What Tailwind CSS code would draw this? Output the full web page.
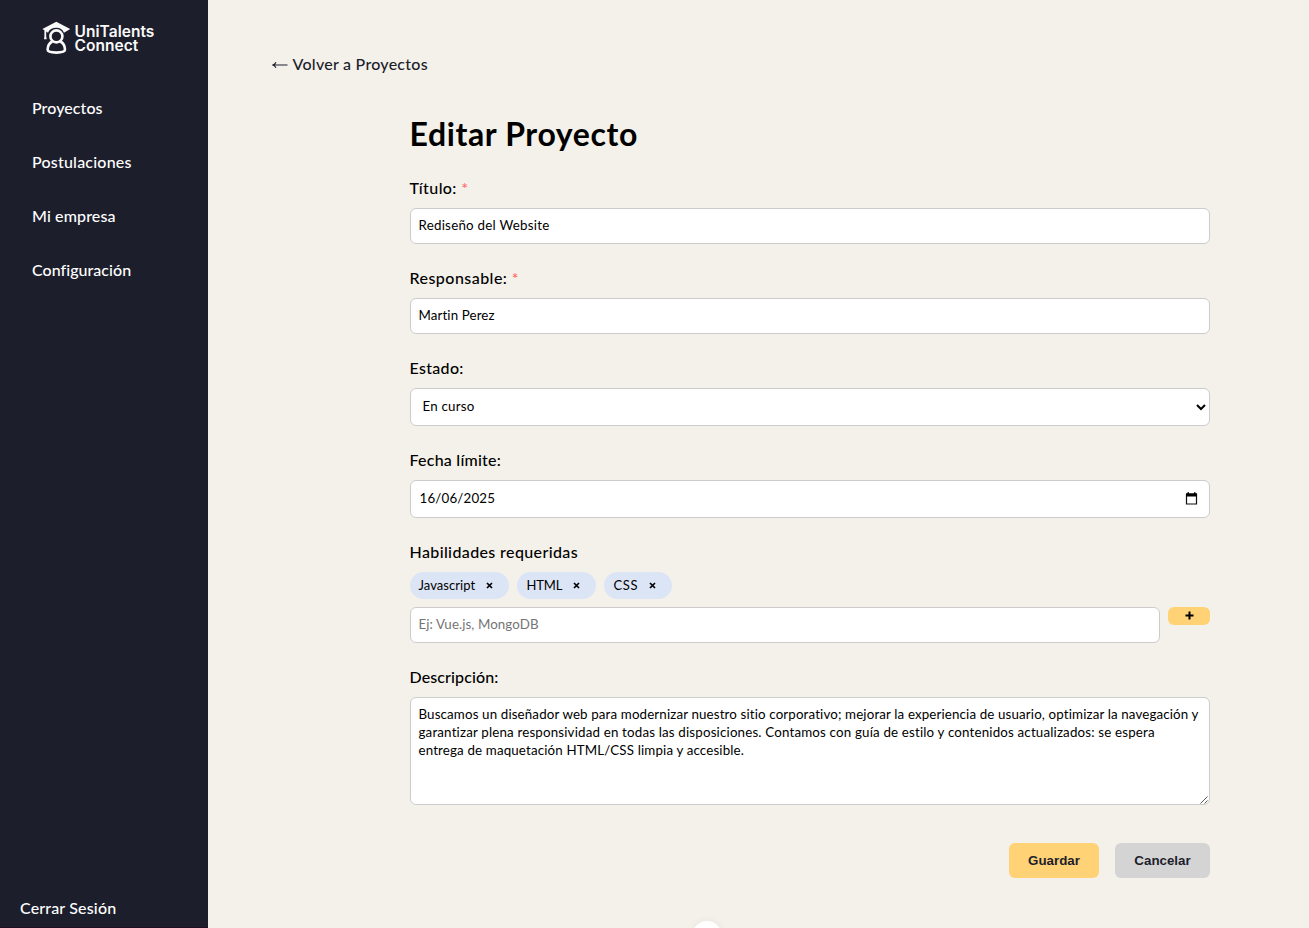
<!DOCTYPE html>
<html lang="es">
<head>
<meta charset="utf-8">
<title>Editar Proyecto</title>
<script src="https://cdn.jsdelivr.net/npm/@tailwindcss/browser@4"></script>
</head>
<body class="flex h-[928px] overflow-hidden bg-[#f4f1ea] font-['Lato',sans-serif] text-base/5 font-medium text-black">
<aside class="flex w-52 shrink-0 flex-col border-b border-[#1f1020] bg-[#1d1e2c] text-white">
  <div class="flex h-[98px] items-start gap-[3.500px] pl-[42px] pt-[21px]">
    <svg class="h-[34px] w-[29px] shrink-0" viewBox="0 0 29 34" fill="none">
      <path d="M.4 8 14.3.8 28.2 8l-6.200 3.800C20.500 8.400 18.200 6.700 14.300 6.700c-4 0-7 1.800-8.300 5L4.200 10.600v4.600l.5 3.100H2l.4-3.100V9.300Z" fill="#fafafa"/>
      <circle cx="14.400" cy="15.400" r="6" stroke="#fafafa" stroke-width="2.600"/>
      <path d="M10.300 20.500c-3.200 1.700-4.600 4.500-4.700 8.100 0 2.100 3.600 3 8.700 3s8.700-.9 8.700-3c-.1-3.600-1.500-6.400-4.600-8.100" stroke="#fafafa" stroke-width="2.600"/>
    </svg>
    <div class="mt-[4px] whitespace-nowrap font-['Inter',sans-serif] text-[15.500px]/[14px] font-semibold tracking-[0.040px] text-[#fafafa]"><div>UniTalents</div><div>Connect</div></div>
  </div>
  <nav class="flex flex-col gap-[34px] pl-8">
    <a class="tracking-[0.080px]">Proyectos</a>
    <a class="tracking-[0.210px]">Postulaciones</a>
    <a class="tracking-[0.120px]">Mi empresa</a>
    <a class="tracking-[0.040px]">Configuración</a>
  </nav>
  <a class="mb-[9px] mt-auto pl-5 tracking-[0.160px]">Cerrar Sesión</a>
</aside>
<main class="relative flex-1 pl-16 pt-[54px]">
  <a class="flex h-5 items-center gap-[4.500px] text-[#1d1e2c]">
    <svg class="mt-0.5 h-3 w-4" viewBox="0 0 16 12" fill="none" stroke="currentColor" stroke-width="1.100"><path d="M15.500 6H1M4 3.200C3.400 4.700 2.300 5.600.8 6c1.500.4 2.600 1.300 3.200 2.800"/></svg>
    <span class="tracking-[0.260px]">Volver a Proyectos</span>
  </a>
  <form class="ml-[138px] mt-[39px] flex w-[800px] flex-col">
    <h1 class="-ml-[0.500px] mb-[23px] text-[32px]/[42px] font-bold tracking-[0.620px]">Editar Proyecto</h1>
    <label class="-ml-[0.500px] mb-2.5 tracking-[0.400px]">Título: <span class="text-[#ff6b6b]">*</span></label>
    <input class="mb-6 h-9 rounded-md border border-[#ccc] bg-white px-[7.500px] pb-0.5 text-[13.333px] font-normal tracking-[0.250px]" value="Rediseño del Website">
    <label class="-ml-[0.500px] mb-2.5 tracking-[0.460px]">Responsable: <span class="text-[#ff6b6b]">*</span></label>
    <input class="mb-6 h-9 rounded-md border border-[#ccc] bg-white px-[7.500px] pb-0.5 text-[13.333px] font-normal tracking-[0.110px]" value="Martin Perez">
    <label class="-ml-[0.500px] mb-2.5 tracking-[0.310px]">Estado:</label>
    <select class="mb-6 h-[38px] rounded-md border border-[#ccc] bg-white px-[7.500px] pb-0.5 text-[13.333px] font-normal tracking-[0.200px]"><option>En curso</option></select>
    <label class="-ml-[0.500px] mb-2.5 tracking-[0.230px]">Fecha límite:</label>
    <div class="mb-6 flex h-[38px] items-center justify-between rounded-md border border-[#ccc] bg-white pb-0.5 pl-[8.500px] pr-[11px] text-[13.333px] font-normal tracking-[0.180px]"><span>16/06/2025</span>
      <svg class="size-[13px]" viewBox="0 0 13 13"><path d="M1.500 2h10v10H1.500Z" fill="none" stroke="#111" stroke-width="1.200"/><path d="M1 1.500h11v3H1ZM2.500.2h1.500v2H2.500ZM9 .2h1.500v2H9Z" fill="#000"/></svg>
    </div>
    <label class="-ml-[0.500px] mb-2.5 tracking-[0.380px]">Habilidades requeridas</label>
    <div class="mb-2 flex gap-2 text-[13px] font-normal">
      <span class="flex h-[27px] w-[99px] items-center justify-between rounded-full bg-[#dce5f6] pb-px pl-[8.500px] pr-4 tracking-[0.060px]"><span>Javascript</span><svg class="mt-px size-[7px]" viewBox="0 0 7 7"><path d="m1 1 5 5M6 1 1 6" stroke="#000" stroke-width="1.700"/></svg></span>
      <span class="flex h-[27px] w-[79px] items-center justify-between rounded-full bg-[#dce5f6] pb-px pl-[9.500px] pr-4 tracking-[-0.150px]"><span>HTML</span><svg class="mt-px size-[7px]" viewBox="0 0 7 7"><path d="m1 1 5 5M6 1 1 6" stroke="#000" stroke-width="1.700"/></svg></span>
      <span class="flex h-[27px] w-[68px] items-center justify-between rounded-full bg-[#dce5f6] pb-px pl-[9.500px] pr-4 tracking-[0.600px]"><span>CSS</span><svg class="mt-px size-[7px]" viewBox="0 0 7 7"><path d="m1 1 5 5M6 1 1 6" stroke="#000" stroke-width="1.700"/></svg></span>
    </div>
    <div class="mb-6 flex items-start gap-2">
      <input class="h-9 flex-1 rounded-md border border-[#ccc] bg-white px-[7.500px] pb-0.5 text-[13.333px] font-normal tracking-[0.080px] placeholder:text-[#757575]" placeholder="Ej: Vue.js, MongoDB">
      <button type="button" class="flex h-[18px] w-[42px] justify-center rounded-md bg-[#ffd275] pt-[3.500px]"><svg class="size-[9px]" viewBox="0 0 9 9"><path d="M4.500.5v8M.5 4.500h8" stroke="#000" stroke-width="2"/></svg></button>
    </div>
    <label class="-ml-[0.500px] mb-2.5 tracking-[0.120px]">Descripción:</label>
    <div class="relative flex h-[108px] flex-col whitespace-nowrap rounded-md border border-[#ccc] bg-white py-[7px] pl-[7.500px] text-[13.333px]/[18px] font-normal">
      <span class="tracking-[0.136px]">Buscamos un diseñador web para modernizar nuestro sitio corporativo; mejorar la experiencia de usuario, optimizar la navegación y</span>
      <span class="tracking-[0.172px]">garantizar plena responsividad en todas las disposiciones. Contamos con guía de estilo y contenidos actualizados: se espera</span>
      <span class="tracking-[0.148px]">entrega de maquetación HTML/CSS limpia y accesible.</span>
      <svg class="absolute bottom-0 right-0 size-[9px]" viewBox="0 0 9 9" stroke="#555" stroke-width="1"><path d="M.5 8.500 7.500 1.500M4.500 8.500l3-3"/></svg>
    </div>
    <div class="mt-[38px] flex justify-end gap-4 font-['Liberation_Sans',sans-serif] text-[13.333px] font-bold text-[#1d1e2c]">
      <button type="button" class="h-[35px] w-[90px] rounded-md bg-[#ffd275]">Guardar</button>
      <button type="button" class="h-[35px] w-[95px] rounded-md bg-[#d4d4d4]">Cancelar</button>
    </div>
  </form>
  <!-- floating round control, partly below the fold -->
  <div class="absolute left-[484px] top-[921px] size-[30px] rounded-full bg-white shadow-[0_0_8px_rgba(0,0,0,0.060)]"></div>
</main>
</body>
</html>
